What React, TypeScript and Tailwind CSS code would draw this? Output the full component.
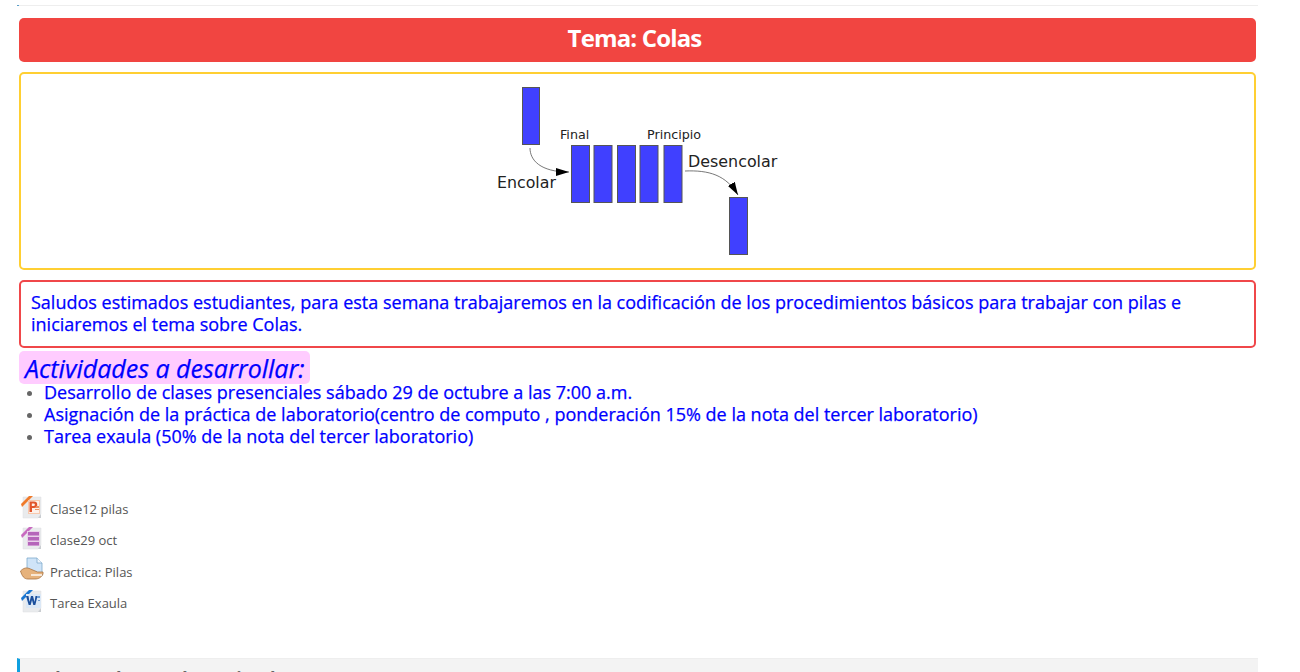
const blue = "text-[#0000ff] [-webkit-text-stroke:0.25px_#0000ff]";

function PptIcon() {
  return (
    <svg width="24" height="24" viewBox="0 0 24 24">
      <path d="M3 2h18v17l-3 4H3z" fill="#e9ebed" stroke="#dcdfe2" strokeWidth="0.5" />
      <path d="M1 9L9 1h4L2 12z" fill="#f07a2a" />
      <rect x="8" y="5" width="12" height="14" fill="#f7c9ae" />
      <rect x="9" y="6" width="10" height="12" fill="#fdf1ea" />
      <path d="M9.500 6.500h4.500a3 3 0 010 6.500h-2v4h-2.500z" fill="#e2552b" />
      <path d="M11.800 8.500h1.800a1 1 0 010 2.500h-1.800z" fill="#fdf1ea" />
      <path d="M16 11h3v2h-3zM15 14h4v1h-4z" fill="#ec8f61" />
      <path d="M18 23l3-4v4z" fill="#c9cdd1" />
    </svg>
  );
}

function NoteIcon() {
  return (
    <svg width="24" height="24" viewBox="0 0 24 24">
      <path d="M3 2h18v17l-3 4H3z" fill="#e9ebed" stroke="#dcdfe2" strokeWidth="0.5" />
      <path d="M1 9L9 1h4L2 12z" fill="#c86bc0" />
      <rect x="7" y="5" width="13" height="15" fill="#e9d0ea" />
      <rect x="8" y="6" width="11" height="3.500" fill="#b565ba" />
      <rect x="8" y="11" width="11" height="3.500" fill="#b565ba" />
      <rect x="8" y="16" width="11" height="3.500" fill="#b565ba" />
      <path d="M18 23l3-4v4z" fill="#c9cdd1" />
    </svg>
  );
}

function AssignIcon() {
  return (
    <svg width="24" height="24" viewBox="0 0 24 24">
      <path d="M7 1h10l5 5v13H7z" fill="#cfe4f8" stroke="#7fa9cc" strokeWidth="0.8" />
      <path d="M17 1v5h5" fill="#eef6fd" stroke="#7fa9cc" strokeWidth="0.8" />
      <path d="M0.500 14c3-3 6-4 10-2l7 3h5.500v2c-2 4-5 5-8 5H8c-4 0-6-3-7.500-8z" fill="#e6b27c" stroke="#a8713f" strokeWidth="0.8" />
      <path d="M11 18h11" stroke="#fff" strokeWidth="1.400" />
    </svg>
  );
}

function WordIcon() {
  return (
    <svg width="24" height="24" viewBox="0 0 24 24">
      <path d="M3 2h18v17l-3 4H3z" fill="#e9ebed" stroke="#dcdfe2" strokeWidth="0.5" />
      <path d="M1 9L9 1h4L2 12z" fill="#1976d2" />
      <rect x="6" y="5" width="15" height="14" fill="#dbe8f6" />
      <path d="M6 7h2.500l1 6 1.500-6h2l1.500 6 1-6h2l-2.200 9h-2l-1.300-5-1.300 5h-2z" fill="#1b4f9c" />
      <path d="M17 7h3v2h-3zM18 11h2v1h-2z" fill="#6d9bd1" />
      <path d="M18 23l3-4v4z" fill="#c9cdd1" />
    </svg>
  );
}

function QueueDiagram() {
  // coordinates measured from the picture
  const queued = [83.5, 106, 129.5, 152, 176];
  return (
    <svg width="300" height="194" viewBox="0 0 300 194" className="block mx-auto">
      <defs>
        <marker id="head" markerWidth="14" markerHeight="8" refX="13" refY="4" orient="auto" markerUnits="userSpaceOnUse">
          <path d="M0 0L13 4L0 8z" fill="#000" />
        </marker>
      </defs>
      <rect x="34.500" y="13.500" width="17" height="57" fill="#4040ff" stroke="#555" />
      {queued.map((x) => (
        <rect key={x} x={x} y="71.500" width="18" height="57" fill="#4040ff" stroke="#555" />
      ))}
      <rect x="241.500" y="123.500" width="18" height="57" fill="#4040ff" stroke="#555" />
      <path d="M42 74c0 12 10 24 39 24" fill="none" stroke="#555" strokeWidth="0.8" markerEnd="url(#head)" />
      <path d="M197 97c24-1 41 4 53 24" fill="none" stroke="#555" strokeWidth="0.8" markerEnd="url(#head)" />
      <g fontFamily="'DejaVu Sans', sans-serif" fill="#222">
        <text x="72" y="64.500" fontSize="12.700">Final</text>
        <text x="159" y="64.500" fontSize="12.700">Principio</text>
        <text x="9" y="114" fontSize="15.800">Encolar</text>
        <text x="200" y="93" fontSize="15.900">Desencolar</text>
      </g>
    </svg>
  );
}

const resources = [
  { name: "Clase12 pilas", Icon: PptIcon },
  { name: "clase29 oct", Icon: NoteIcon },
  { name: "Practica: Pilas", Icon: AssignIcon },
  { name: "Tarea Exaula", Icon: WordIcon },
];

export default function App() {
  return (
    <div className="h-[672px] overflow-hidden bg-white font-['Open_Sans',sans-serif] text-[#333]">
      <div className="ml-[17px] w-[1241px] pt-[5px]">
        <div className="h-px border-l-2 border-l-[#5a9fc9] bg-[#eeeeee]" />
        <div className="mx-[2px] mt-3 w-[1237px]">
          <div className="flex h-[44px] items-center justify-center rounded-[5px] bg-[#f14541] pb-[4px] pr-[6px] text-2xl font-bold tracking-[-0.85px] text-white">
            Tema: Colas
          </div>
          <div className="mt-[10px] h-[198px] rounded-[5px] border-2 border-[#ffcf32] bg-white">
            <QueueDiagram />
          </div>
          <div className={`mt-[10px] h-[68px] rounded-[5px] border-2 border-[#f0474a] px-[10px] py-[9px] text-[18px] leading-[22px] ${blue}`}>
            Saludos estimados estudiantes, para esta semana trabajaremos en la codificación de los procedimientos básicos para trabajar con pilas e iniciaremos el tema sobre Colas.
          </div>
          <div className="mt-[3px]">
            <span className={`inline-block h-[33px] rounded-[5px] bg-[#ffccff] pl-[6px] pr-[5px] text-[25px] italic leading-[35px] ${blue}`}>
              Actividades a desarrollar:
            </span>
          </div>
          <ul className={`-mt-[3px] ml-[25px] list-disc text-[18px] leading-[22px] marker:text-[14px] marker:text-[#666] ${blue}`}>
            <li>Desarrollo de clases presenciales sábado 29 de octubre a las 7:00 a.m.</li>
            <li>Asignación de la práctica de laboratorio(centro de computo , ponderación 15% de la nota del tercer laboratorio)</li>
            <li>Tarea exaula (50% de la nota del tercer laboratorio)</li>
          </ul>
          <div className="mt-[44px] flex flex-col">
            {resources.map(({ name, Icon }) => (
              <div key={name} className="flex h-[31.400px] items-center text-[13px] text-[#555]">
                <span className="ml-px w-[30px]">
                  <Icon />
                </span>
                <span className="pt-[6px]">{name}</span>
              </div>
            ))}
          </div>
        </div>
        <div className="mt-[41px] h-[40px] border-l-[3px] border-t border-l-[#0fa0e0] border-t-[#eeeeee] bg-[#f3f3f3] pl-[4px] text-[18px] font-bold leading-[38px] text-[#666]">
          31 de octubre - 5 de noviembre
        </div>
      </div>
    </div>
  );
}
